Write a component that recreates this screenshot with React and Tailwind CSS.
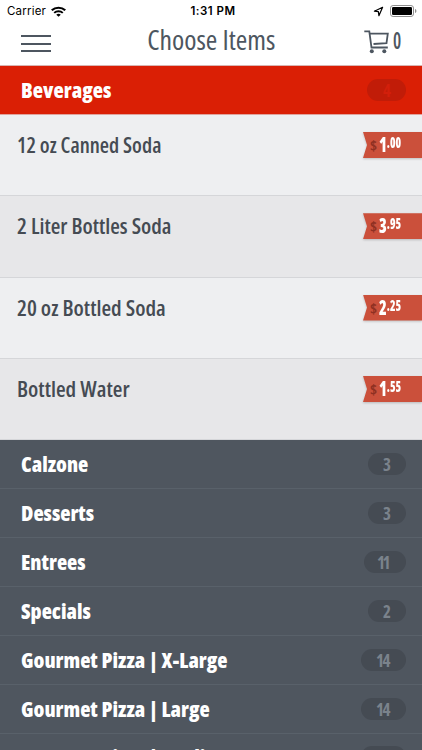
const items = [
  { name: '12 oz Canned Soda', dollars: '1', cents: '.00', stretch: 'scale-x-[1.01]' },
  { name: '2 Liter Bottles Soda', dollars: '3', cents: '.95', stretch: 'scale-x-[1.05]' },
  { name: '20 oz Bottled Soda', dollars: '2', cents: '.25', stretch: 'scale-x-[1.055]' },
  { name: 'Bottled Water', dollars: '1', cents: '.55', stretch: 'scale-x-[1.055]' },
];

// the badge classes tighten the double digits
const categories = [
  { name: 'Calzone', count: 3 },
  { name: 'Desserts', count: 3 },
  { name: 'Entrees', count: 11, badge: 'w-[42px] tracking-[-2.5px] pr-[18px]' },
  { name: 'Specials', count: 2 },
  { name: 'Gourmet Pizza | X-Large', count: 14, badge: 'w-[45px] tracking-[-1.5px] pr-[17px]' },
  { name: 'Gourmet Pizza | Large', count: 14, badge: 'w-[45px] tracking-[-1.5px] pr-[17px]' },
  { name: 'Gourmet Pizza | Medium', count: 14, badge: 'w-[45px] tracking-[-1.5px] pr-[17px]' },
];

function StatusBar() {
  return (
    <div className="grid h-[22px] shrink-0 grid-cols-[1fr_auto_1fr] items-center pr-[5px] pl-[7px] font-['Inter',sans-serif] text-[11.5px] font-stretch-normal text-black">
      <div className="flex items-center gap-[5px] pt-[2px]">
        <span className="tracking-[0.2px]">Carrier</span>
        <svg width="15" height="11" viewBox="0 0 14 11" preserveAspectRatio="none" className="-mt-[2px]">
          <path d="M0.7 4.3a9 9 0 0 1 12.6 0" fill="none" stroke="#000" strokeWidth="2.1" />
          <path d="M3 6.9a5.7 5.7 0 0 1 8 0" fill="none" stroke="#000" strokeWidth="1.8" />
          <path d="M4.9 8.7a3 3 0 0 1 4.2 0L7 10.8z" fill="#000" />
        </svg>
      </div>
      <span className="pt-[2px] pl-[2px] text-[11.5px] font-semibold tracking-[0.5px]">1:31 PM</span>
      <div className="flex items-center justify-end gap-[6px]">
        <svg width="11" height="11" viewBox="0 0 11 11">
          <path d="M9.6 1.3 1.4 5.2l4 .5.5 4z" fill="none" stroke="#000" strokeWidth="1.2" strokeLinejoin="round" />
        </svg>
        <svg width="27" height="12" viewBox="0 0 27 12" className="-mt-px">
          <rect x="0.5" y="0.5" width="23" height="11" rx="2.6" fill="none" stroke="#8e8e8e" />
          <rect x="2" y="2" width="20" height="8" rx="1.3" fill="#000" />
          <path d="M25 4v4c.9-.3 1.4-1 1.4-2S25.9 4.3 25 4z" fill="#8e8e8e" />
        </svg>
      </div>
    </div>
  );
}

function Header() {
  return (
    <div className="grid h-[44px] shrink-0 grid-cols-[1fr_auto_1fr] border-b border-[#d8b5b2] px-[21px] text-[#4d5660]">
      <div className="flex flex-col gap-[5.5px] pt-[13px]">
        <span className="h-[2px] w-[30px] bg-[#4d5660]" />
        <span className="h-[2px] w-[30px] bg-[#4d5660]" />
        <span className="h-[2px] w-[30px] bg-[#4d5660]" />
      </div>
      <h1 className="scale-x-[1.03] text-[27px] leading-[36px] font-stretch-75%">Choose Items</h1>
      <div className="flex justify-end gap-[4px]">
        <svg width="25" height="24" viewBox="0 0 25 24" className="mt-[8px]" fill="none" stroke="#4d5660" strokeWidth="1.8">
          <path d="M0.3 1.3H5.3L7.5 17.5H23.8" />
          <path d="M5.7 3.6H23.8L22.5 13.2L9.5 14" />
          <circle cx="7.8" cy="21.3" r="2" fill="#4d5660" stroke="none" />
          <circle cx="20.3" cy="21.3" r="2" fill="#4d5660" stroke="none" />
        </svg>
        <span className="w-[8px] origin-left scale-x-[0.78] text-[23.5px] leading-[37px] font-semibold font-stretch-75%">0</span>
      </div>
    </div>
  );
}

function PriceTag({ dollars, cents }) {
  return (
    <div className="mt-[17px] h-[26px] w-[59px] drop-shadow-[0_1px_1px_rgba(0,0,0,0.2)]">
      <div className="flex h-full items-start bg-[#cb503b] pl-[7px] font-extrabold text-white [clip-path:polygon(0_0,100%_0,100%_100%,0_100%,4px_50%)]">
        <span className="w-[9px] text-[15px] leading-[26px] font-bold text-[#8f3022] font-stretch-75%">$</span>
        <div className="flex origin-left scale-x-[0.75]">
          <span className="text-[21px] leading-[25px] font-stretch-75%">{dollars}</span>
          <span className="text-[15px] leading-[20px] font-stretch-75%">{cents}</span>
        </div>
      </div>
    </div>
  );
}

function ItemRow({ item }) {
  return (
    <div className="flex h-[81.3px] justify-between border-b border-[#d5d6d9] bg-[#eeeff1] pl-[17px] text-[#454b53] even:bg-[#e7e7e9]">
      <span className={`origin-left pt-[17px] text-[21px] leading-[27px] font-semibold font-stretch-75% ${item.stretch}`}>{item.name}</span>
      <PriceTag dollars={item.dollars} cents={item.cents} />
    </div>
  );
}

function CategoryRow({ name, count, badge = 'w-[38px] pr-[15px]' }) {
  return (
    <div className="flex h-[48.9px] shrink-0 items-center justify-between border-b border-[#59616a] bg-[#4f565f] pr-[16px] pl-[21px] text-white">
      <span className="origin-left scale-x-[1.005] text-[21px] leading-[28px] font-extrabold font-stretch-75%">{name}</span>
      <span className={`h-[22px] rounded-full bg-[#454b53] text-right text-[17px] leading-[23px] font-bold text-[#7b838c] font-stretch-75% ${badge}`}>
        {count}
      </span>
    </div>
  );
}

export default function App() {
  return (
    <div className="flex h-[750px] flex-col overflow-hidden bg-white font-['Open_Sans',sans-serif]">
      <StatusBar />
      <Header />
      <div className="flex h-[49px] shrink-0 items-center justify-between border-b border-[#e0a39d] bg-[#da1f05] pr-[16px] pl-[21px] text-white">
        <span className="origin-left scale-x-[1.01] text-[21px] leading-[28px] font-extrabold font-stretch-75%">Beverages</span>
        <span className="h-[22px] w-[39px] rounded-full bg-[#c11c08] pr-[15px] text-right text-[17px] leading-[23px] font-bold text-[#d31f0b] font-stretch-75%">4</span>
      </div>
      <div className="shrink-0">
        {items.map((item) => (
          <ItemRow key={item.name} item={item} />
        ))}
      </div>
      {categories.map((c) => (
        <CategoryRow key={c.name} name={c.name} count={c.count} badge={c.badge} />
      ))}
    </div>
  );
}
